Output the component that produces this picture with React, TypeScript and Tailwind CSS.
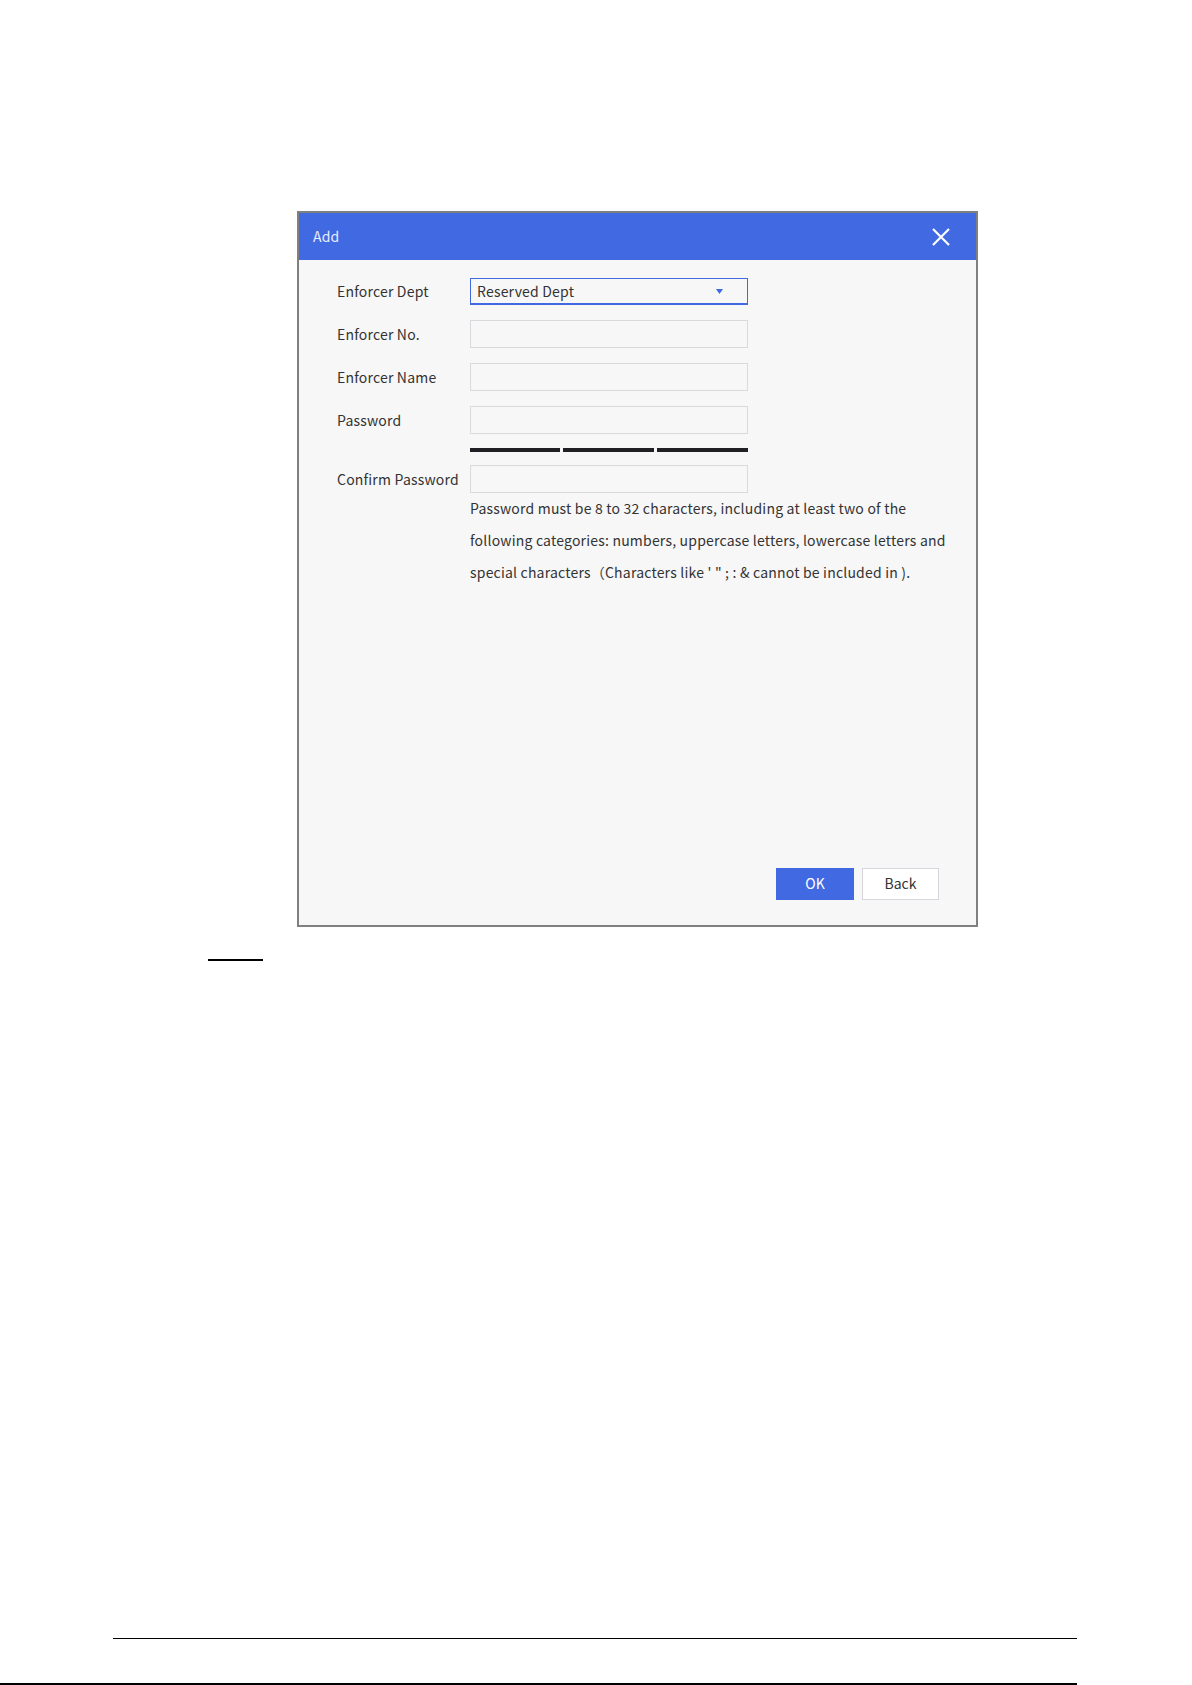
import React from 'react';

const font = { fontFamily: '"Noto Sans CJK SC", "Noto Sans", sans-serif' };

function Field({ label, children }: { label: string; children: React.ReactNode }) {
  return (
    <div className="flex items-center">
      <div className="w-[133px] text-[14px] tracking-[0.2px] text-[#333]">{label}</div>
      {children}
    </div>
  );
}

function TextBox() {
  return <div className="w-[278px] h-[28px] border border-[#d9d9de] bg-[#f7f7f7]" />;
}

export default function App() {
  return (
    <div className="relative w-[1192px] h-[1685px] bg-white overflow-hidden" style={font}>
      <div className="pt-[211px] pl-[297px]">
        <div className="w-[681px] h-[716px] border-2 border-[#808080] bg-[#f7f7f7] flex flex-col">
          <div className="h-[47px] bg-[#4169e1] flex items-center justify-between pl-[14px] pr-[25px]">
            <span className="text-[14px] tracking-[0.2px] text-[#e8edff]">Add</span>
            <svg width="20" height="20" viewBox="0 0 20 20">
              <path d="M2 2 L18 18 M18 2 L2 18" stroke="white" strokeWidth="2.2" />
            </svg>
          </div>
          <div className="flex-1 flex flex-col pl-[38px] pt-[18px]">
            <div className="flex flex-col gap-[15px]">
              <Field label="Enforcer Dept">
                <div className="w-[278px] h-[27px] border border-[#4169e1] border-b-2 bg-[#f7f7f7] flex items-center justify-between pl-[6px] pr-[24px]">
                  <span className="text-[14px] tracking-[0.2px] text-[#333]">Reserved Dept</span>
                  <svg width="7" height="5" viewBox="0 0 7 5">
                    <path d="M0 0 H7 L3.5 5 Z" fill="#4169e1" />
                  </svg>
                </div>
              </Field>
              <Field label="Enforcer No.">
                <TextBox />
              </Field>
              <Field label="Enforcer Name">
                <TextBox />
              </Field>
              <Field label="Password">
                <TextBox />
              </Field>
            </div>
            <div className="ml-[133px] mt-[14px] flex gap-[3px] w-[278px]">
              <div className="h-[4px] w-[90px] bg-[#1f1f24]" />
              <div className="h-[4px] w-[91px] bg-[#1f1f24]" />
              <div className="h-[4px] w-[91px] bg-[#1f1f24]" />
            </div>
            <div className="mt-[13px]">
              <Field label="Confirm Password">
                <TextBox />
              </Field>
            </div>
            <div className="ml-[133px] -mt-[1px] text-[14px] tracking-[0.2px] leading-[32px] text-[#333] w-[480px]">
              <div>Password must be 8 to 32 characters, including at least two of the</div>
              <div>following categories: numbers, uppercase letters, lowercase letters and</div>
              <div>special characters（Characters like ' " ; : &amp; cannot be included in ).</div>
            </div>
            <div className="flex-1" />
            <div className="flex justify-end gap-[8px] pr-[37px] pb-[25px]">
              <button className="w-[78px] h-[32px] bg-[#4169e1] text-white text-[14px] leading-none pb-[2px]">OK</button>
              <button className="w-[77px] h-[32px] bg-white border border-[#d6d6dc] text-[#333] text-[14px] leading-none pb-[2px]">Back</button>
            </div>
          </div>
        </div>
      </div>
      <div className="ml-[208px] mt-[32px] w-[55px] h-[2px] bg-black" />
      <div className="absolute left-[113px] top-[1638px] w-[964px] h-[1px] bg-black" />
      <div className="absolute left-0 top-[1683px] w-[1077px] h-[2px] bg-black" />
    </div>
  );
}
